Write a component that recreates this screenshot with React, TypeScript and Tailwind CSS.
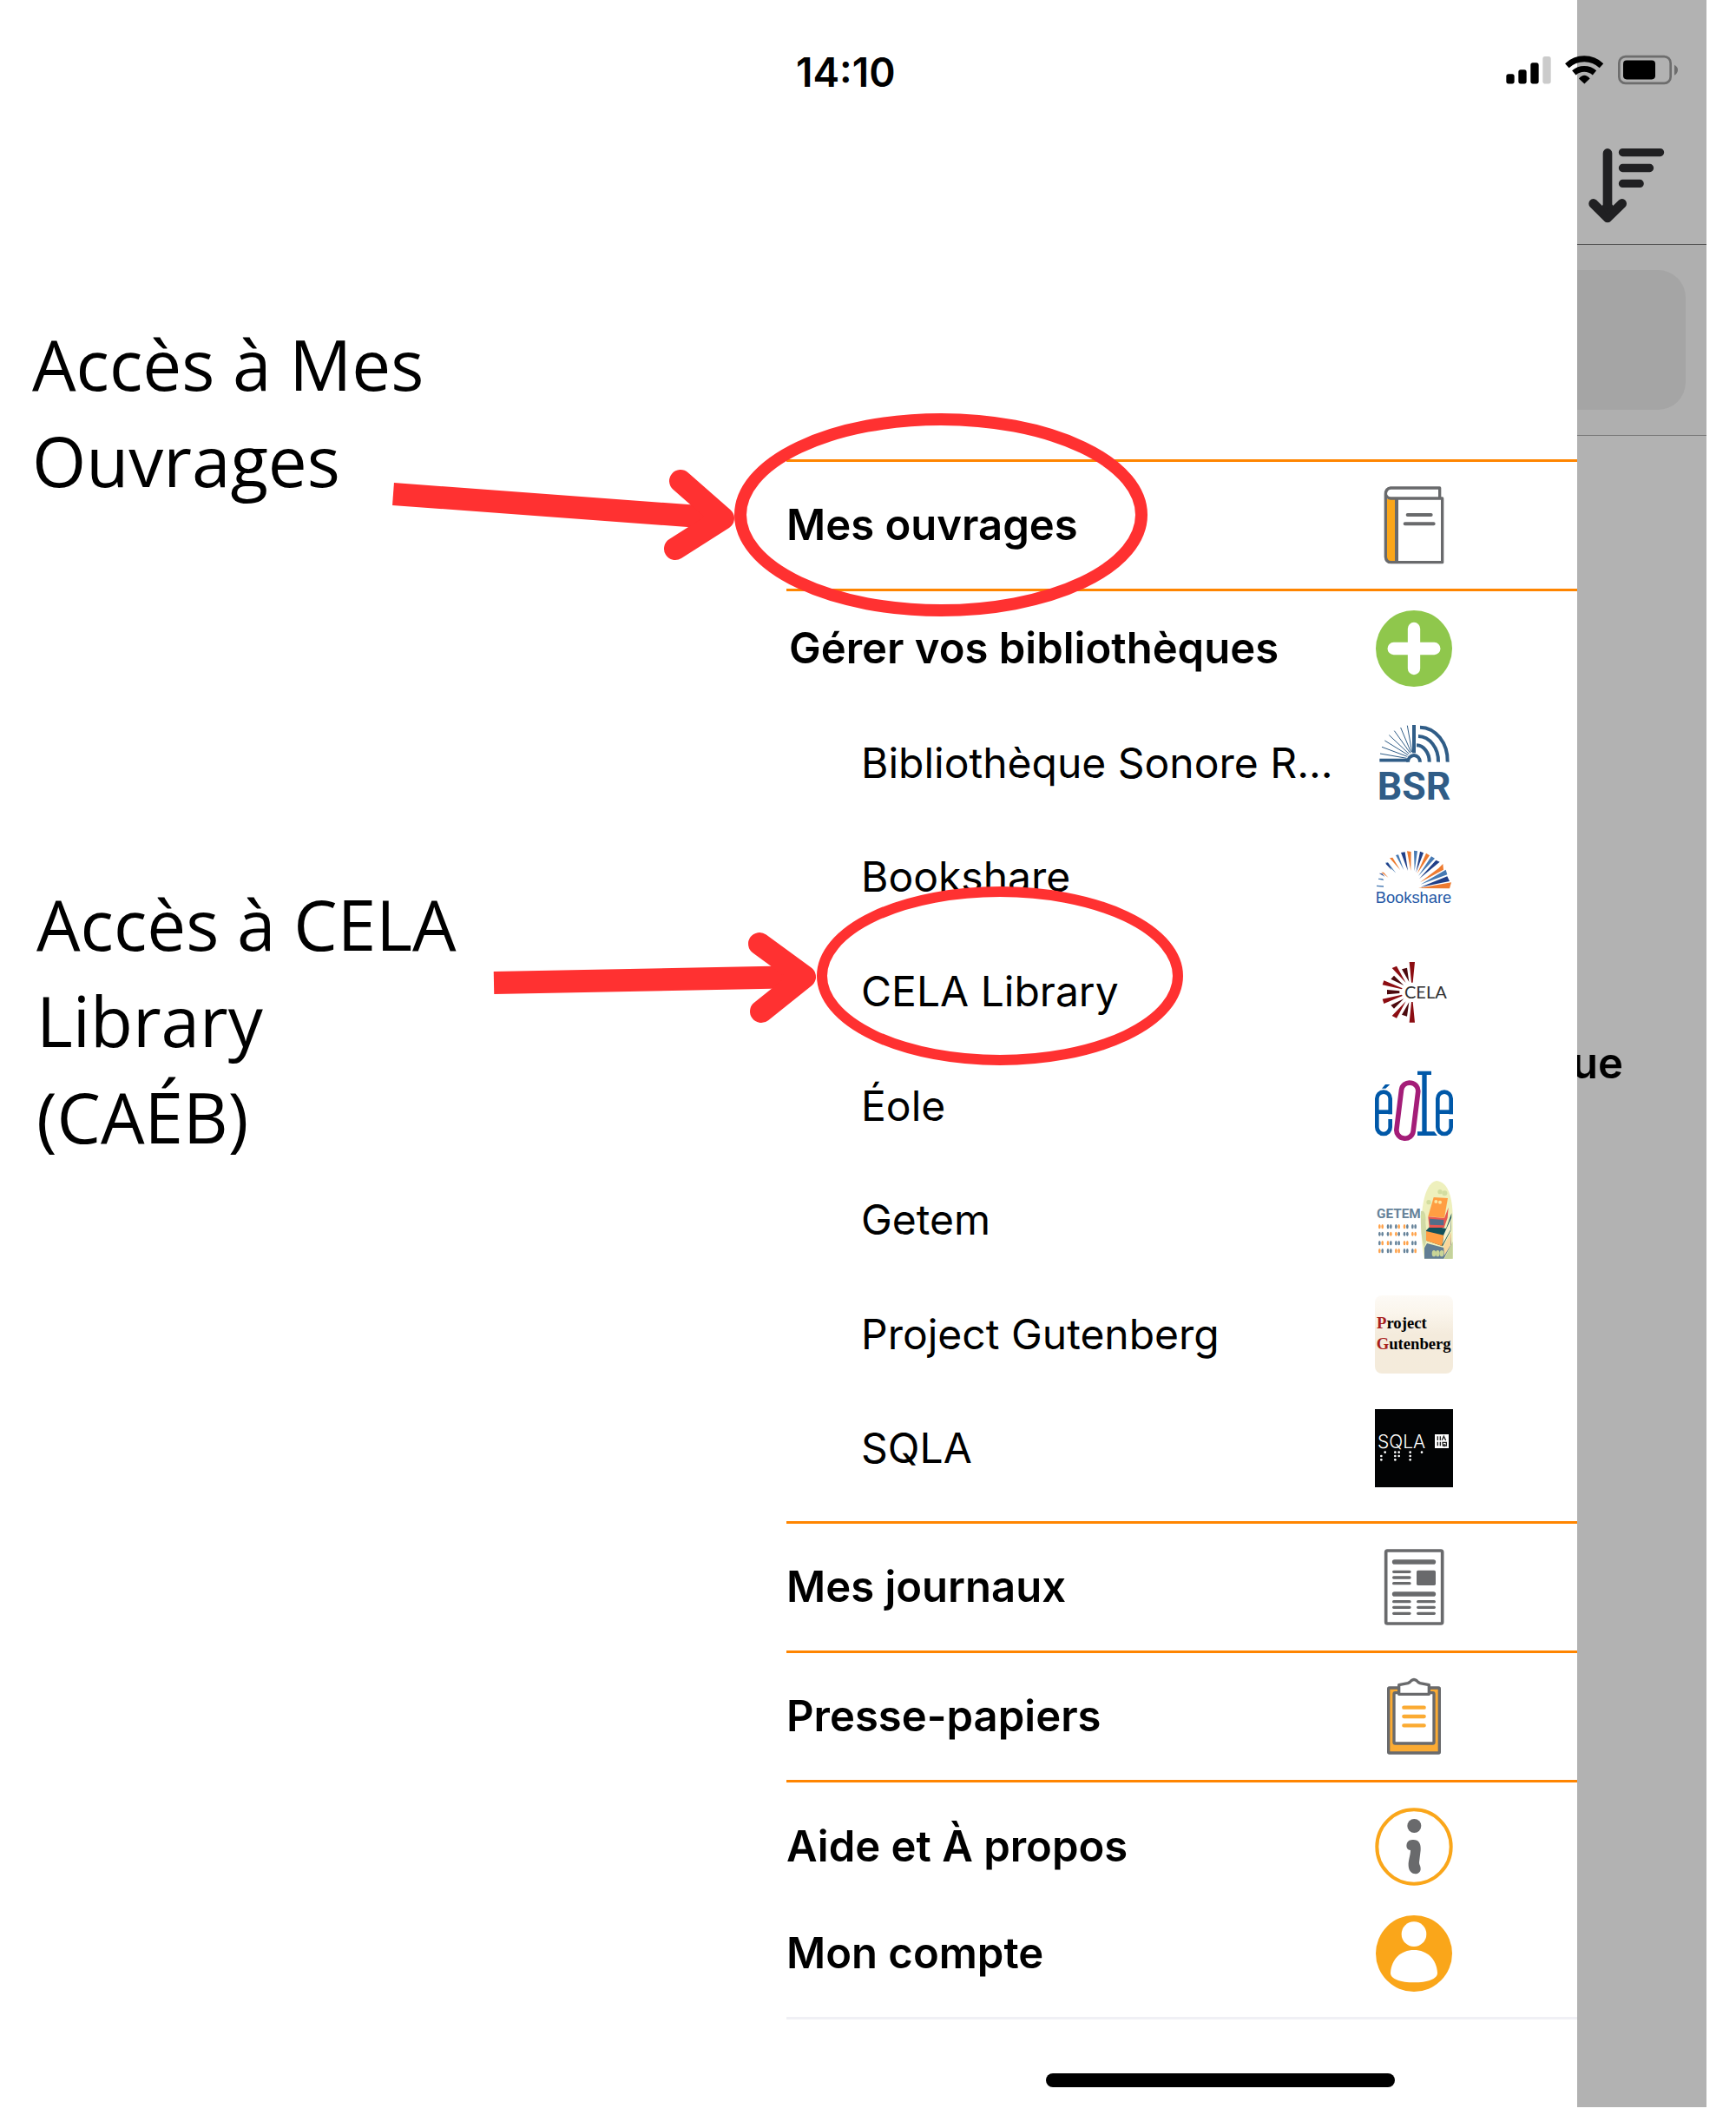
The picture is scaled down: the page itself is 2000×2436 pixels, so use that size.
import type { ReactNode } from "react";

const Icon = ({ viewBox, children }: { viewBox: string; children: ReactNode }) => (
  <svg
    viewBox={viewBox}
    className="size-[90px] flex-none overflow-visible"
    aria-hidden="true"
  >
    {children}
  </svg>
);

const BookIcon = () => (
  <Icon viewBox="72 62 270 270">
    <path d="M110 106V312Q112 325 126 325H146V106Z" fill="#faa61a" />
    <g fill="none" stroke="#696a6c" strokeWidth="10" strokeLinejoin="round">
      <path d="M296 100V68H126Q109 70 109 90V306Q110 325 128 325H305V104H126Q109 102 109 86" />
      <path d="M147 104V325" strokeWidth="12" />
      <path d="M185 161H266M176 192H275" strokeWidth="12" strokeLinecap="round" />
    </g>
  </Icon>
);

const PlusIcon = () => (
  <Icon viewBox="72 486 270 270">
    <circle cx="207" cy="621" r="132" fill="#8fc74c" />
    <path
      d="M207 552V690M137 621H277"
      stroke="#fff"
      strokeWidth="43"
      strokeLinecap="round"
    />
  </Icon>
);

const BsrLogo = () => (
  <Icon viewBox="72 42 270 270">
    <g stroke="#305d87" fill="none">
      <path d="M88 167H186" strokeWidth="11" />
      <path d="M207 45V142" strokeWidth="12" />
      <path d="M186 173A21 23 0 0 1 228 173" strokeWidth="12" />
      <path d="M216 115A45 56 0 0 1 260 173" strokeWidth="12" />
      <path d="M222 84A70 86 0 0 1 291 173" strokeWidth="12" />
      <path d="M228 53A96 116 0 0 1 323 173" strokeWidth="12" />
      <path
        d="M90 144L182 160M96 121L184 154M106 99L187 149M121 80L190 145M139 65L194 142M161 54L197 140M184 47L200 138"
        strokeWidth="3"
      />
    </g>
    <text
      x="80"
      y="304"
      fontSize="134"
      className="fill-[#305d87] font-bold font-['Roboto',sans-serif]"
    >
      BSR
    </text>
  </Icon>
);

const BookshareLogo = () => (
  <Icon viewBox="72 436 270 270">
    <path
      d="M183 482L197 484L196 550ZM249 489L261 497L218 560ZM123 506L133 504L160 548ZM292 541L307 526L309 546L228 590ZM94 555L102 555L118 573ZM222 610L336 590L330 611Z"
      fill="#ee7b30"
    />
    <path
      d="M207 480L219 482L209 551ZM144 496L153 494L172 548ZM267 500L279 507L222 568ZM108 522L117 521L145 558ZM317 546L322 563L230 597ZM84 576L99 577L103 583L84 579ZM78 600L102 602V606L78 604Z"
      fill="#477ab3"
    />
    <path
      d="M162 487L176 485L186 550ZM228 483L240 488L214 556ZM283 513L296 519L225 578ZM109 525L117 522L130 548ZM322 569L330 586L230 606ZM86 558L97 560L106 570Z"
      fill="#203f88"
    />
    <text
      x="74"
      y="660"
      fontSize="55"
      className="fill-[#2458a6] font-['Liberation_Sans',sans-serif]"
    >
      Bookshare
    </text>
  </Icon>
);

const CelaLogo = () => (
  <Icon viewBox="72 51 270 270">
    <path
      d="M191 84H210L203 155H198ZM131 105L147 98L179 156ZM98 163L103 148L167 175L165 178ZM98 212L103 228L167 201L165 197ZM131 270L147 278L179 220ZM191 293H210L203 222H198Z"
      fill="#8c0d12"
    />
    <path
      d="M165 109L183 104L190 153ZM127 143L138 131L172 165ZM114 180L157 184V192L114 196ZM127 233L138 245L172 211ZM165 266L183 272L190 223Z"
      fill="#4d0a0e"
    />
    <text
      x="174"
      y="210"
      fontSize="60"
      className="fill-[#303030] font-['Lato',sans-serif]"
    >
      CELA
    </text>
  </Icon>
);

const EoleLogo = () => (
  <Icon viewBox="72 445 270 270">
    <g fill="none" stroke="#0058a8" strokeWidth="14">
      <rect x="79" y="531" width="46" height="145" rx="23" />
      <rect x="289" y="531" width="46" height="145" rx="23" />
    </g>
    <rect x="117" y="608" width="16" height="17" fill="#fff" />
    <rect x="327" y="608" width="16" height="17" fill="#fff" />
    <g fill="#0058a8">
      <rect x="79" y="593" width="53" height="14" />
      <rect x="289" y="593" width="53" height="14" />
      <path d="M96 519L108 505H124L109 519Z" />
      <path d="M219 459H267V472H251V668H277L288 682H219V668H235V472H219Z" />
    </g>
    <rect
      x="155"
      y="499"
      width="58"
      height="193"
      rx="28"
      transform="rotate(7 184 595)"
      fill="none"
      stroke="#a41d78"
      strokeWidth="17"
    />
  </Icon>
);

const dotColumns = [88, 98, 117, 127, 145, 155, 174, 184, 202, 212];
const dotRows = [218, 244, 275, 302];

const GetemLogo = () => (
  <Icon viewBox="72 60 270 270">
    <text
      x="78"
      y="190"
      fontSize="46"
      className="fill-[#66839a] font-bold font-['Liberation_Sans_Narrow','Roboto',sans-serif]"
    >
      GETEM
    </text>
    {dotRows.map((y, row) =>
      dotColumns.map((x, col) => (
        <ellipse
          key={`${x}-${y}`}
          cx={x}
          cy={y}
          rx="4"
          ry="8"
          fill={(row * 2 + col) % 5 < 2 ? "#ffa24a" : "#66839a"}
        />
      ))
    )}
    <path d="M285 60C330 64 341 130 341 190V329H243C225 250 225 70 285 60Z" fill="#eef0bd" />
    <path d="M231 165Q250 160 247 205L252 260L243 290Q228 250 231 165Z" fill="#d0d9a5" />
    <path d="M312 330L341 270V329Z" fill="#c4d29b" />
    <g fill="#d3dda0">
      <circle cx="297" cy="98" r="8" />
      <circle cx="313" cy="103" r="9" />
      <circle cx="258" cy="134" r="8" />
      <circle cx="238" cy="183" r="8" />
    </g>
    <path d="M243 292L252 276L312 292L335 240L336 280L310 329H243Z" fill="#627e94" />
    <path d="M309 285L336 238L334 282L312 318Z" fill="#f9d79d" />
    <path d="M249 232L265 215L318 225L337 172L334 232L306 286L249 266Z" fill="#13505a" />
    <path d="M249 234L310 248L304 285L249 267Z" fill="#ff9e43" />
    <path d="M310 246L336 188L333 230L306 280Z" fill="#f5f0cb" />
    <path d="M275 117L324 120L312 188L256 183Z" fill="#ff9e43" />
    <path d="M256 184L312 189L326 152L323 188L311 222H260Z" fill="#e85852" />
    <path d="M261 191L310 195V214L262 212Z" fill="#536d89" />
    <g fill="#fbe6a0">
      <circle cx="283" cy="132" r="6" />
      <circle cx="297" cy="134" r="6" />
      <ellipse cx="276" cy="311" rx="7" ry="11" fill="#c9d597" />
      <ellipse cx="289" cy="311" rx="7" ry="11" fill="#c9d597" />
      <ellipse cx="303" cy="311" rx="7" ry="11" fill="#c9d597" />
    </g>
  </Icon>
);

const GutenbergLogo = () => (
  <Icon viewBox="72 454 270 270">
    <defs>
      <linearGradient id="paper" x1="0" y1="0" x2="0" y2="1">
        <stop offset="0" stopColor="#fdfaf6" />
        <stop offset="0.2" stopColor="#fbf6ed" />
        <stop offset="0.5" stopColor="#f4ebdc" />
        <stop offset="1" stopColor="#f4ebdb" />
      </linearGradient>
    </defs>
    <rect x="72" y="454" width="270" height="270" rx="24" fill="url(#paper)" />
    <g fontSize="56" className="font-bold font-['Liberation_Serif',serif]">
      <text x="78" y="567">
        <tspan fill="#a8201a">P</tspan>roject
      </text>
      <text x="77" y="639">
        <tspan fill="#a8201a">G</tspan>utenberg
      </text>
    </g>
  </Icon>
);

const SqlaLogo = () => (
  <Icon viewBox="72 69 270 270">
    <rect x="72" y="69" width="270" height="270" fill="#020304" />
    <text
      x="81"
      y="204"
      fontSize="63"
      className="fill-white font-light font-['Inter',sans-serif]"
    >
      SQLA
    </text>
    <g fill="#fff">
      {[
        [107, 218], [94, 231], [94, 244], [142, 218], [155, 218], [142, 231],
        [155, 231], [142, 244], [194, 218], [194, 231], [194, 244], [234, 218],
      ].map(([x, y]) => (
        <circle key={`${x}-${y}`} cx={x} cy={y} r="4" />
      ))}
      <rect x="279" y="156" width="48" height="48" />
    </g>
    <path
      d="M289 163V177M298 163V177M289 182V196M298 182V196M304 176L310 163L317 177M306 184H319V195H307ZM312 189V199"
      fill="none"
      stroke="#222"
      strokeWidth="4"
    />
  </Icon>
);

const NewspaperIcon = () => (
  <Icon viewBox="72 549 270 270">
    <g fill="none" stroke="#696a6c" strokeLinecap="round">
      <rect x="110" y="558" width="195" height="252" rx="5" strokeWidth="11" />
      <path d="M140 597H274M140 708H274" strokeWidth="17" />
      <path
        d="M137 631H192M137 651H192M137 671H192M137 734H192M137 754H192M137 775H192M221 734H277M221 754H277M221 775H277"
        strokeWidth="10"
      />
    </g>
    <rect x="216" y="626" width="66" height="52" rx="5" fill="#696a6c" />
  </Icon>
);

const ClipboardIcon = () => (
  <Icon viewBox="72 98 270 270">
    <g stroke="#696a6c" strokeWidth="10" strokeLinejoin="round">
      <rect x="119" y="134" width="176" height="225" rx="3" fill="#fbab33" />
      <rect x="138" y="151" width="138" height="175" rx="4" fill="#fff" />
      <path
        d="M155 124L186 118Q194 115 198 109Q207 102 216 109Q220 115 228 118L259 124V156H155Z"
        fill="#fff"
      />
    </g>
    <path
      d="M172 202H242M172 233H242M172 264H242"
      stroke="#fbab33"
      strokeWidth="13"
      strokeLinecap="round"
    />
  </Icon>
);

const InfoIcon = () => (
  <Icon viewBox="72 546 270 270">
    <circle cx="207" cy="681" r="128" fill="none" stroke="#faa61a" strokeWidth="12" />
    <circle cx="208" cy="609" r="24" fill="#696a6c" />
    <path
      d="M197 658C222 654 232 668 230 693L225 735C225 744 230 746 230 758C230 780 190 784 188 747C187 727 195 711 195 693C175 693 178 659 197 658Z"
      fill="#696a6c"
    />
  </Icon>
);

const AccountIcon = () => (
  <Icon viewBox="72 914 270 270">
    <circle cx="207" cy="1049" r="132" fill="#faa61a" />
    <circle cx="207" cy="982" r="43" fill="#fff" />
    <path
      d="M126 1115C129 1069 161 1037 207 1037S285 1069 288 1115C289 1138 252 1149 207 1149S125 1138 126 1115Z"
      fill="#fff"
    />
  </Icon>
);

const libraries = [
  { name: "Bibliothèque Sonore R...", logo: <BsrLogo /> },
  { name: "Bookshare", logo: <BookshareLogo /> },
  { name: "CELA Library", logo: <CelaLogo /> },
  { name: "Éole", logo: <EoleLogo /> },
  { name: "Getem", logo: <GetemLogo /> },
  { name: "Project Gutenberg", logo: <GutenbergLogo /> },
  { name: "SQLA", logo: <SqlaLogo /> },
];

const MenuRow = ({
  label,
  icon,
  className,
}: {
  label: string;
  icon: ReactNode;
  className: string;
}) => (
  <button
    type="button"
    className={`flex w-full items-center justify-between pr-[143px] text-left text-[49px] font-semibold ${className}`}
  >
    {label}
    {icon}
  </button>
);

const StatusBar = () => (
  <header className="absolute inset-x-0 top-0 flex items-start justify-between pt-[61px] pr-8 pl-[71px]">
    <time className="text-[46px] leading-[44px] font-semibold">14:10</time>
    <svg
      viewBox="102 180 600 111"
      preserveAspectRatio="none"
      className="h-[38px] w-[200px]"
      aria-hidden="true"
    >
      <rect x="106" y="251" width="28" height="33" rx="8" />
      <rect x="148" y="236" width="28" height="48" rx="8" />
      <rect x="190" y="213" width="28" height="71" rx="8" />
      <rect x="232" y="192" width="28" height="92" rx="8" fill="#cbcbcb" />
      <g fill="none" stroke="#000" strokeWidth="20">
        <path d="M316 223A88 88 0 0 1 435 223" />
        <path d="M340 247A54 54 0 0 1 411 247" />
      </g>
      <path d="M376 284L357 266Q376 244 395 266Z" />
      <rect
        x="496"
        y="192"
        width="178"
        height="90"
        rx="22"
        fill="none"
        stroke="#6d6d6d"
        strokeWidth="8"
      />
      <rect x="510" y="205" width="111" height="64" rx="12" />
      <path d="M687 220Q699 226 699 237T687 255Z" fill="#6d6d6d" />
    </svg>
  </header>
);

const Drawer = () => (
  <div className="flex grow flex-col pt-[529px] pl-[60px]">
    <nav className="leading-[60px]">
      <MenuRow
        label="Mes ouvrages"
        icon={<BookIcon />}
        className="h-[149px] border-t-3 border-[#ff8500]"
      />
      <section className="border-y-3 border-[#ff8500] pb-[18px]">
        <MenuRow
          label="Gérer vos bibliothèques"
          icon={<PlusIcon />}
          className="h-[132px] pl-[3px]"
        />
        <ul className="flex h-[921px] flex-col">
          {libraries.map(({ name, logo }) => (
            <li key={name} className="flex flex-1">
              <a
                href="#"
                className="flex grow items-center justify-between pr-[143px] pl-[86px] text-[48px]"
              >
                {name}
                {logo}
              </a>
            </li>
          ))}
        </ul>
      </section>
      <MenuRow
        label="Mes journaux"
        icon={<NewspaperIcon />}
        className="h-[149px] border-b-3 border-[#ff8500]"
      />
      <MenuRow
        label="Presse-papiers"
        icon={<ClipboardIcon />}
        className="h-[149px] border-b-3 border-[#ff8500]"
      />
      <MenuRow label="Aide et À propos" icon={<InfoIcon />} className="h-[148px]" />
      <MenuRow label="Mon compte" icon={<AccountIcon />} className="h-[98px]" />
    </nav>
    <div className="mt-6 border-t-3 border-[#f0f0f5]" />
  </div>
);

const Backdrop = () => (
  <div className="w-[149px] flex-none overflow-hidden bg-[#b2b2b2]">
    <div className="h-[282px] border-b border-[#4c4c4c] pt-[169px] pl-3">
      <button type="button" aria-label="Trier" className="block">
        <svg
          viewBox="388 492 270 258"
          preserveAspectRatio="none"
          className="h-[89px] w-[90px]"
        >
          <g fill="none" stroke="#202022" strokeLinecap="round" strokeLinejoin="round">
            <path d="M457 514V729M408 682L457 729L507 682" strokeWidth="32" />
            <path d="M444 690L457 715L471 690Z" strokeWidth="10" />
            <path d="M509 511H639M509 563H603M509 615H569" strokeWidth="27" />
          </g>
        </svg>
      </button>
    </div>
    <div className="h-[220px] border-b border-[#777] bg-[#afafaf] pt-[29px] pr-6">
      <input
        type="search"
        aria-label="Rechercher"
        className="block h-[161px] w-full rounded-r-[32px] bg-[#a5a5a5]"
      />
    </div>
    <p className="flex justify-end pt-[693px] pr-24 text-[49px] leading-[60px] font-semibold">
      ue
    </p>
  </div>
);

const Marks = () => (
  <svg
    viewBox="446 470 920 770"
    className="pointer-events-none absolute top-[470px] -left-[400px] h-[770px] w-[920px]"
    fill="none"
    stroke="#ff3131"
    aria-hidden="true"
  >
    <g strokeWidth="26" strokeLinejoin="round">
      <path d="M453 569L833 597" />
      <path d="M784 554L833 597L778 632" strokeLinecap="round" />
      <path d="M569 1132L927 1125" />
      <path d="M875 1087L927 1125L877 1165" strokeLinecap="round" />
    </g>
    <ellipse cx="1084" cy="593" rx="231" ry="110" strokeWidth="14" />
    <ellipse cx="1152" cy="1124" rx="205" ry="97" strokeWidth="12" />
  </svg>
);

const App = () => {
  return (
    <main className="flex bg-white pr-[34px] pb-[9px] font-['Inter',sans-serif] text-black">
      <aside className="flex flex-1 flex-col gap-[423px] pt-[363px] font-['Open_Sans',sans-serif] text-[80px] leading-[111px]">
        <p className="pl-[37px]">
          Accès à Mes
          <br />
          Ouvrages
        </p>
        <p className="pl-[42px]">
          Accès à CELA
          <br />
          Library
          <br />
          (CAÉB)
        </p>
      </aside>
      <div className="relative flex w-[1120px] flex-none">
        <div className="flex grow flex-col">
          <Drawer />
          <div className="flex justify-center pt-[62px] pb-[23px] pl-[149px]">
            <div className="h-4 w-[402px] rounded-full bg-black" />
          </div>
        </div>
        <Backdrop />
        <StatusBar />
        <Marks />
      </div>
    </main>
  );
};

export default App;
